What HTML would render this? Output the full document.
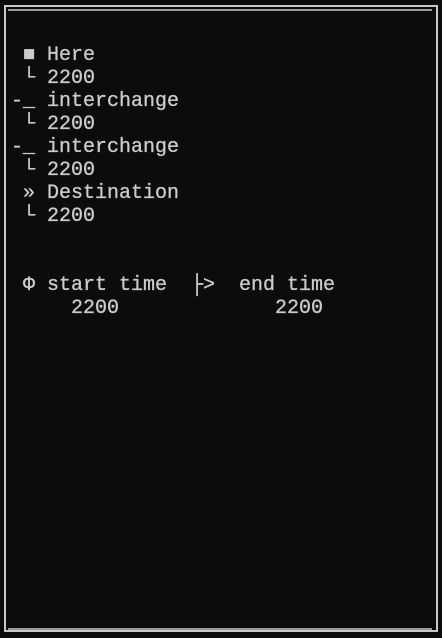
<!DOCTYPE html>
<html><head><meta charset="utf-8"><style>
html,body{margin:0;padding:0;background:#0c0c0c;width:442px;height:638px;overflow:hidden}
.b1{position:absolute;left:4px;top:5px;width:430px;height:623px;border:2px solid #c8c8c8;border-bottom-width:2px}
.b2{position:absolute;left:8px;top:9px;width:424px;height:617px;border-top:2px solid #9a9a9a;border-bottom:2px solid #9a9a9a}
pre{position:absolute;left:11px;top:44px;margin:0;font-family:"Liberation Mono","DejaVu Sans Mono",monospace;font-size:20px;line-height:23px;color:#cccccc;letter-spacing:0;-webkit-text-stroke:0.3px #cccccc}
</style></head><body>
<div class="b1"></div><div class="b2"></div>
<pre> ■ Here
 └ 2200
-_ interchange
 └ 2200
-_ interchange
 └ 2200
 » Destination
 └ 2200


 Φ start time  ├>  end time
     2200             2200</pre>
</body></html>
